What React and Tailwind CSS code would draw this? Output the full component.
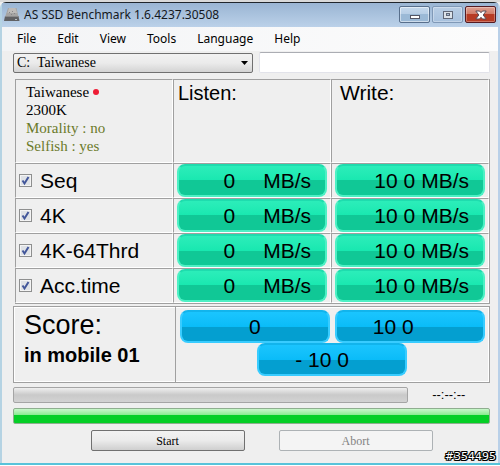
import React from "react";

const menuItems = ["File", "Edit", "View", "Tools", "Language", "Help"];

const tests = [
  { id: "seq", label: "Seq", listen: "0", write: "10 0" },
  { id: "4k", label: "4K", listen: "0", write: "10 0" },
  { id: "4k64", label: "4K-64Thrd", listen: "0", write: "10 0" },
  { id: "acc", label: "Acc.time", listen: "0", write: "10 0" },
];

const cell = "border border-t-[#a0a0a0] border-l-[#a0a0a0] border-r-white border-b-white";
const greenPill =
  "mx-auto flex h-[33px] w-[150px] items-center rounded-lg border-2 border-[#4df0c4] border-t-[#1fdcae] bg-linear-to-b bg-origin-border from-[#2eeebb] from-0% via-[#18e8b0] via-50% to-[#10c896] to-50% text-[21px] leading-[29px]";
const bluePill =
  "flex h-[33px] w-[150px] items-center rounded-lg border-2 border-[#38ccff] border-t-[#12b4ec] bg-linear-to-b bg-origin-border from-[#1cc6ff] from-0% via-[#0abcf8] via-50% to-[#049fd0] to-50% text-[21px] leading-[29px]";

const DriveIcon = () => (
  <svg width="16" height="14" viewBox="0 0 16 14" aria-hidden="true">
    <path d="M4 0h8.500l2 9H1z" fill="#a5a4a3" />
    <path d="M5 0h6.500l1.500 5H3.500z" fill="#bdbbb9" />
    <path d="M1 8h13.500l1 5H0z" fill="#606164" />
    <path d="M1 8.500h14" stroke="#8b8b8c" />
    <path d="M5 4.500h1M8 3.500h1M10 5.500h1M7 6.500h1" stroke="#858588" />
    <path d="M11 11.500h2" stroke="#b9c0c4" />
  </svg>
);

const TitleBar = () => (
  <header className="flex h-[24px] items-start bg-linear-to-b from-[#9ab5d3] to-[#bbd1e9] px-0.5">
    <div className="flex flex-1 items-center gap-1 pt-1">
      <DriveIcon />
      <h1 className="text-[12px] leading-4 whitespace-nowrap text-[#14181d]">AS SSD Benchmark 1.6.4237.30508</h1>
    </div>
    <div className="flex gap-0.5 pt-[3px]">
      <button
        type="button"
        aria-label="Minimize"
        className="flex h-[17px] w-[31px] items-center justify-center rounded-xs border border-[#586f8c] bg-linear-to-b from-[#c6d9ed] from-0% via-[#b6cde5] via-50% to-[#9bb9d6] to-50% inset-ring inset-ring-white/50"
      >
        <svg width="12" height="12" viewBox="0 0 12 12">
          <rect x="1.5" y="6.5" width="9" height="3" fill="#fff" stroke="#535666" />
        </svg>
      </button>
      <button
        type="button"
        aria-label="Maximize"
        className="flex h-[17px] w-[31px] items-center justify-center rounded-xs border border-[#8099b7] bg-linear-to-b from-[#b9cee5] to-[#a7c1de] inset-ring inset-ring-white/30"
      >
        <svg width="12" height="12" viewBox="0 0 12 12">
          <rect x="1.5" y="2.5" width="9" height="7" fill="#dce3ea" stroke="#606878" />
          <rect x="4.5" y="4.5" width="3" height="2" fill="#a7bdd5" stroke="#606878" />
        </svg>
      </button>
      <button
        type="button"
        aria-label="Close"
        className="flex h-[17px] w-[31px] items-center justify-center rounded-xs border border-[#551b22] bg-linear-to-b from-[#dfa092] from-0% via-[#d07a66] via-50% to-[#b73c25] to-50% inset-ring inset-ring-white/30"
      >
        <svg width="12" height="12" viewBox="0 0 12 12">
          <path
            d="M.8 2h3.700L6 3.700 7.500 2h3.700L8.200 6l3 4H7.500L6 8.300 4.500 10H.8l3-4z"
            fill="#fff"
            stroke="#574c57"
            strokeLinejoin="round"
          />
        </svg>
      </button>
    </div>
  </header>
);

const TestCheckbox = ({ id, label }) => (
  <label htmlFor={id} className="flex items-center gap-2 pl-[3px]">
    <span className="grid size-[13px] *:col-start-1 *:row-start-1">
      <input
        id={id}
        type="checkbox"
        defaultChecked
        className="peer size-[13px] appearance-none border border-[#8e8f8f] bg-[#dfe2e6] inset-ring inset-ring-[#f4f4f4]"
      />
      <svg
        viewBox="0 0 13 13"
        className="pointer-events-none invisible size-[13px] peer-checked:visible"
        aria-hidden="true"
      >
        <path d="M3.500 6.500 5.500 9.500 9.500 3" fill="none" stroke="#42569a" strokeWidth="2" />
      </svg>
    </span>
    <span className="text-[21px] leading-6">{label}</span>
  </label>
);

const ProgressBar = ({ label, value, className }) => (
  <div
    role="progressbar"
    aria-label={label}
    aria-valuenow={value}
    className={`h-4 rounded-xs border ${className}`}
  />
);

const App = () => {
  return (
    <div className="relative bg-[#efefef] font-['Liberation_Sans',Arial,sans-serif] text-black">
      <div className="border-t-2 border-b-2 border-t-[#d9d9d9] border-b-[#58c3da]">
        <div className="rounded-t-md border-t border-r-2 border-l-2 border-t-[#20262c] border-r-[#b9d0e8] border-l-[#b5d3e3]">
          <div className="font-['Noto_Sans','Open_Sans',sans-serif]">
            <TitleBar />
            <nav className="flex h-6 items-center gap-[21px] bg-linear-to-r from-[#f3f4f6] to-[#fcfcfc] pl-[15px] text-[12px] leading-5">
              {menuItems.map((item) => (
                <button key={item} type="button">
                  {item}
                </button>
              ))}
            </nav>
          </div>

          <main className="pr-2 pb-3 pl-[11px]">
            <div className="flex gap-1.5 pt-px">
              <div className="grid flex-[242] items-center *:col-start-1 *:row-start-1">
                <select
                  aria-label="Drive"
                  className="h-5 w-full appearance-none rounded-xs border border-[#707070] bg-linear-to-b from-[#f2f2f2] from-0% via-[#ebebeb] via-50% to-[#d4d4d4] pl-[3px] font-['Liberation_Serif',serif] text-[14px] leading-4"
                >
                  <option>C:&nbsp; Taiwanese</option>
                </select>
                <svg
                  width="7"
                  height="4"
                  viewBox="0 0 7 4"
                  className="pointer-events-none mr-[5px] justify-self-end"
                  aria-hidden="true"
                >
                  <path d="M0 0h7L3.500 4z" />
                </svg>
              </div>
              <input
                type="text"
                aria-label="Status"
                className="h-[21px] min-w-0 flex-[230] rounded-xs border border-[#e2e3ea] border-t-[#abadb3] bg-white text-sm"
              />
            </div>

            <div className="pl-0.5">
              <table className="mt-1.5 w-full table-fixed border-separate border-spacing-0 border-r border-b border-[#a0a0a0]">
                <thead>
                  <tr className="h-[84px] text-left align-top">
                    <th
                      scope="col"
                      className={`${cell} pt-[3px] pl-2.5 font-['Liberation_Serif',serif] text-[15px] leading-[18px] font-normal`}
                    >
                      <div className="flex items-center gap-1">
                        Taiwanese
                        <span className="size-1.5 rounded-full bg-[#ee1c35]" />
                      </div>
                      <div>2300K</div>
                      <div className="text-[#6b7a2a]">Morality : no</div>
                      <div className="text-[#6b7a2a]">Selfish : yes</div>
                    </th>
                    <th scope="col" className={`${cell} pt-px pl-1 text-[20px] leading-6 font-normal`}>
                      Listen:
                    </th>
                    <th scope="col" className={`${cell} pt-px pl-2 text-[21px] leading-6 font-normal`}>
                      Write:
                    </th>
                  </tr>
                </thead>
                <tbody>
                  {tests.map((test) => (
                    <tr key={test.id} className="h-[35px]">
                      <th scope="row" className={`${cell} text-left font-normal`}>
                        <TestCheckbox id={test.id} label={test.label} />
                      </th>
                      <td className={cell}>
                        <div className={`${greenPill} justify-end gap-7 pr-3.5`}>
                          <span>{test.listen}</span>
                          <span>MB/s</span>
                        </div>
                      </td>
                      <td className={cell}>
                        <div className={`${greenPill} justify-end gap-1.5 pr-3.5`}>
                          <span>{test.write}</span>
                          <span>MB/s</span>
                        </div>
                      </td>
                    </tr>
                  ))}
                </tbody>
              </table>
            </div>

            <section className="mt-0.5 flex border border-[#a0a0a0] inset-ring inset-ring-white">
              <div className="w-[34%] border-r border-[#a0a0a0] pt-1 pl-2.5">
                <h2 className="text-[27px] leading-7">Score:</h2>
                <p className="pt-1 text-[20px] leading-6 font-bold">in mobile 01</p>
              </div>
              <div className="flex flex-1 flex-col items-center pt-[3px] pb-1.5">
                <div className="flex gap-[5px]">
                  <div className={`${bluePill} justify-center`}>0</div>
                  <div className={`${bluePill} pl-9`}>10 0</div>
                </div>
                <div className={`${bluePill} pl-9`}>- 10 0</div>
              </div>
            </section>

            <div className="mt-1 flex items-center">
              <ProgressBar
                label="Current test"
                value={0}
                className="flex-[395] border-[#a5a5a5] bg-linear-to-b from-[#efefef] from-0% via-[#c9c9c9] via-50% to-[#d3d3d3]"
              />
              <span className="flex-[83] text-center text-[13px] leading-4">--:--:--</span>
            </div>
            <div className="mt-[5px]">
              <ProgressBar
                label="Overall"
                value={100}
                className="border-[#8fae8f] bg-linear-to-b from-[#c9f6cb] from-0% via-[#8cec93] via-40% to-[#05cf26] to-45%"
              />
            </div>

            <div className="mt-1.5 flex justify-center gap-[34px] pl-5 font-['Liberation_Serif',serif] text-[12px] leading-4">
              <button
                type="button"
                className="h-[21px] w-[154px] rounded-xs border border-[#707070] bg-linear-to-b from-[#f2f2f2] from-0% via-[#ebebeb] via-50% to-[#cfcfcf]"
              >
                Start
              </button>
              <button
                type="button"
                disabled
                className="h-[21px] w-[154px] rounded-xs border border-[#adb2b5] bg-[#f4f4f4] text-[#838383]"
              >
                Abort
              </button>
            </div>
          </main>
        </div>
      </div>

      <span className="absolute right-1 bottom-0.5 font-['DejaVu_Sans',sans-serif] text-[11px] leading-3 text-white [text-shadow:1px_0_#000,-1px_0_#000,0_1px_#000,0_-1px_#000,1px_1px_#000,-1px_-1px_#000,1px_-1px_#000,-1px_1px_#000]">
        #354495
      </span>
    </div>
  );
};

export default App;
